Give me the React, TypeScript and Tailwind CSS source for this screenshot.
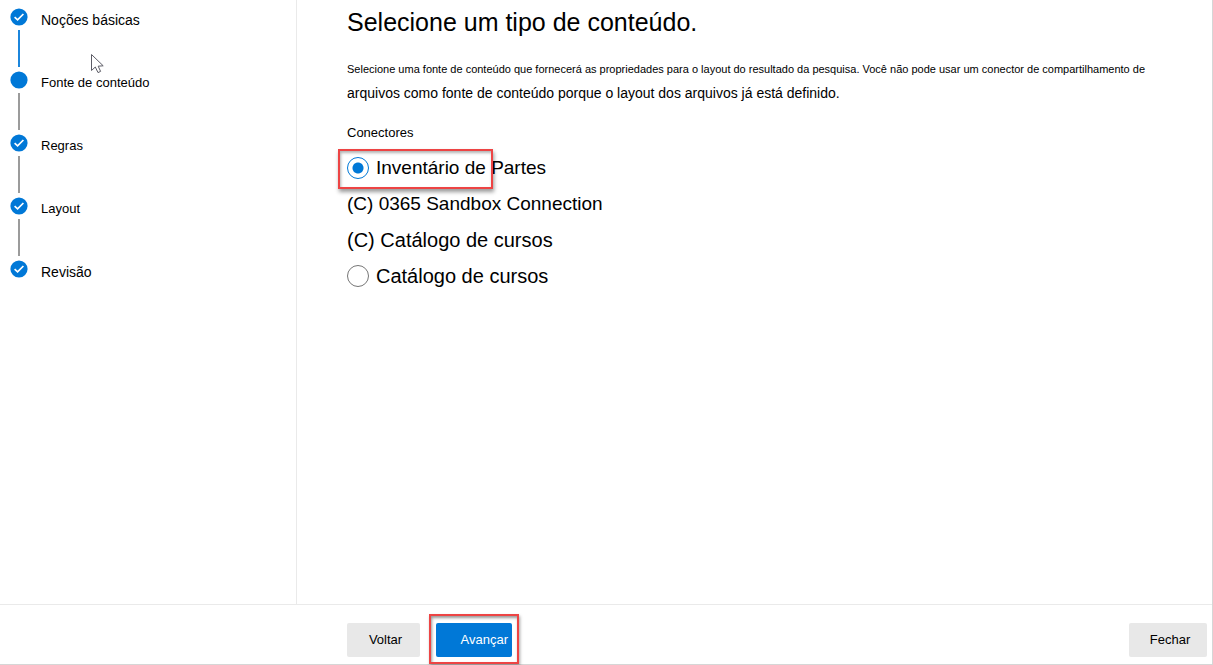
import { useState } from "react";

type Step = { label: string; done: boolean; size: string };

const steps: Step[] = [
  { label: "Noções básicas", done: true, size: "text-[14px]" },
  { label: "Fonte de conteúdo", done: false, size: "text-[13px]" },
  { label: "Regras", done: true, size: "text-[13px]" },
  { label: "Layout", done: true, size: "text-[13px]" },
  { label: "Revisão", done: true, size: "text-[14px]" },
];

function StepMarker({ done }: { done: boolean }) {
  return (
    <svg viewBox="0 0 18 18" className="size-[18px]" aria-hidden="true">
      <circle cx="9" cy="9" r="8.6" fill="#0078d7" />
      {done && (
        <path d="M4.6 9.2 L7.6 11.9 L13.4 6" fill="none" stroke="#fff" strokeWidth="1.7" />
      )}
    </svg>
  );
}

function Cursor() {
  return (
    <svg
      viewBox="0 0 15 21"
      className="pointer-events-none absolute top-[53px] left-[90px] h-[21px] w-[15px]"
      aria-hidden="true"
    >
      <path
        d="M1.5 1.5 V17.5 L5.3 14 L8 19.6 L10.6 18.4 L8.2 13.2 L13.2 12.8 Z"
        fill="#fff"
        stroke="#5c5c66"
        strokeWidth="1"
      />
    </svg>
  );
}

function Sidebar() {
  return (
    <nav aria-label="Etapas" className="relative w-[297px] shrink-0 border-r border-[#eaeaea] pt-2 pl-[10px]">
      <ol>
        {steps.map((step, i) => (
          <li key={step.label} className="flex gap-[13px]">
            <div className="flex w-[18px] flex-col items-center">
              <StepMarker done={step.done} />
              {i < steps.length - 1 && (
                <span className={`my-1 h-[37px] w-[2px] ${i === 0 ? "bg-[#1c86dc]" : "bg-[#9b9b9b]"}`} />
              )}
            </div>
            <span className={`pt-[2px] leading-5 ${step.size}`}>{step.label}</span>
          </li>
        ))}
      </ol>
      <Cursor />
    </nav>
  );
}

const radioClass =
  "size-[22px] shrink-0 appearance-none rounded-full border border-[#767676] bg-white checked:border-[#0078d7] checked:bg-[radial-gradient(circle,#0078d7_5px,transparent_6px)]";

function Connectors() {
  const [selected, setSelected] = useState("inventario");
  return (
    <fieldset className="mt-[18px]">
      <legend className="text-[13px] leading-5">Conectores</legend>
      <div className="mt-[7px] flex flex-col text-[20px] leading-9">
        <div className="relative">
          <label className="flex items-center gap-[7px] text-[19px]">
            <input
              type="radio"
              name="conector"
              checked={selected === "inventario"}
              onChange={() => setSelected("inventario")}
              className={radioClass}
            />
            Inventário de Partes
          </label>
          <span className="pointer-events-none absolute -top-[1px] -left-[9px] h-10 w-[155px] border-2 border-[#ed4444] shadow-[1px_3px_4px_rgba(0,0,0,0.4),inset_1px_2px_3px_rgba(0,0,0,0.3)]" />
        </div>
        <p className="text-[19px]">(C) 0365 Sandbox Connection</p>
        <p>(C) Catálogo de cursos</p>
        <label className="flex items-center gap-[7px]">
          <input
            type="radio"
            name="conector"
            checked={selected === "catalogo"}
            onChange={() => setSelected("catalogo")}
            className={radioClass}
          />
          Catálogo de cursos
        </label>
      </div>
    </fieldset>
  );
}

export default function App() {
  return (
    <div className="flex min-h-screen flex-col border-r border-b border-[#d6d6d6] bg-white font-['Liberation_Sans',Arial,sans-serif] text-black">
      <div className="flex flex-1">
        <Sidebar />
        <main className="min-w-0 flex-1 pt-1 pr-10 pl-[50px]">
          <h1 className="text-[25px] leading-9">Selecione um tipo de conteúdo.</h1>
          <p className="mt-[17px] leading-6">
            <span className="block text-[11px]">
              Selecione uma fonte de conteúdo que fornecerá as propriedades para o layout do resultado da pesquisa. Você não pode usar um conector de compartilhamento de
            </span>
            <span className="block text-[14px]">
              arquivos como fonte de conteúdo porque o layout dos arquivos já está definido.
            </span>
          </p>
          <Connectors />
        </main>
      </div>
      <footer className="flex items-start border-t border-[#eaeaea] pt-[18px] pr-[5px] pb-[7px] pl-[347px] text-[13px]">
        <button type="button" className="h-[34px] w-[73px] rounded-[2px] bg-[#e8e8e8] pl-1">
          Voltar
        </button>
        <div className="relative ml-4 flex">
          <button type="button" className="h-[34px] w-[76px] rounded-[2px] bg-[#0078d7] pr-1 text-right text-white">
            Avançar
          </button>
          <span className="pointer-events-none absolute -inset-x-[7px] -top-[9px] -bottom-[7px] border-2 border-[#ed4444] shadow-[1px_2px_3px_rgba(0,0,0,0.35),inset_1px_2px_3px_rgba(0,0,0,0.4)]" />
        </div>
        <button type="button" className="ml-auto h-[34px] w-[78px] rounded-[2px] bg-[#e8e8e8] pl-1">
          Fechar
        </button>
      </footer>
    </div>
  );
}
